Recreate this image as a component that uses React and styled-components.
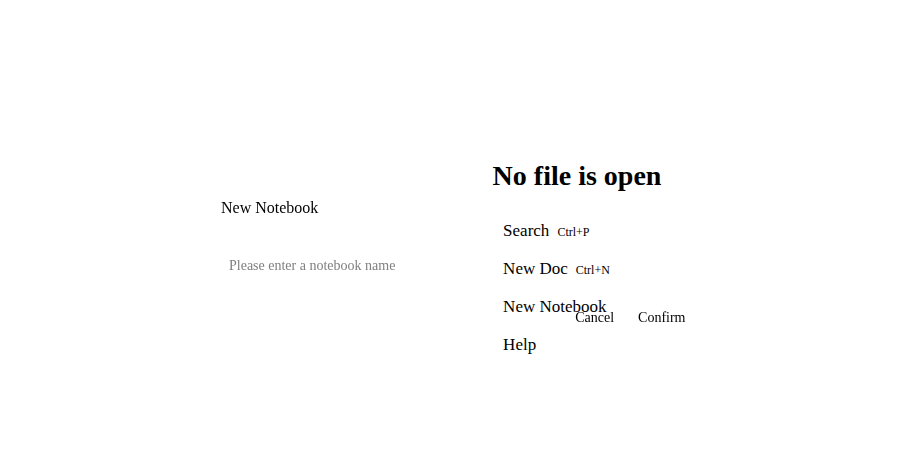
import React, { useState } from 'react';
import styled, { createGlobalStyle } from 'styled-components';

const GlobalStyle = createGlobalStyle`
  html, body {
    margin: 0;
    padding: 0;
    background: #ffffff;
  }
  body {
    font-family: "Liberation Serif", "Times New Roman", serif;
    color: #000000;
  }
`;

const Page = styled.div`
  display: flex;
  height: 468px;
  width: 100%;
`;

const Sidebar = styled.aside`
  width: 245px;
  flex-shrink: 0;
`;

const Main = styled.main`
  flex: 1;
  display: flex;
  justify-content: center;
  padding-top: 160px;
`;

const Empty = styled.div`
  display: flex;
  flex-direction: column;
`;

const Title = styled.h1`
  margin: 0 0 20px;
  font-size: 28px;
  line-height: 32px;
  font-weight: 700;
`;

const ActionList = styled.ul`
  list-style: none;
  margin: 0;
  padding: 0;
`;

const Action = styled.li`
  height: 20px;
  padding: 9px 10px 9px 10.5px;
  font-size: 17px;
  line-height: 20px;
  white-space: nowrap;
`;

const Shortcut = styled.span`
  margin-left: 8px;
  font-size: 12px;
`;

const Overlay = styled.div`
  position: fixed;
  inset: 0;
  display: flex;
  justify-content: center;
  align-items: flex-start;
  padding-top: 199px;
  pointer-events: none;
`;

const Dialog = styled.div`
  width: 500px;
  box-sizing: border-box;
  padding: 0 7px 0 16.5px;
  pointer-events: auto;
`;

const DialogTitle = styled.div`
  font-size: 16px;
  line-height: 18px;
  margin-bottom: 33px;
`;

const NameInput = styled.input`
  display: block;
  width: 100%;
  box-sizing: border-box;
  border: none;
  outline: none;
  background: transparent;
  padding: 8px 8px;
  font-family: "Liberation Serif", "Times New Roman", serif;
  font-size: 14px;
  line-height: 16px;
  color: #000;

  &::placeholder {
    color: #808080;
  }
`;

const Footer = styled.div`
  display: flex;
  justify-content: flex-end;
  margin-top: 22px;
`;

const TextButton = styled.button`
  border: none;
  background: transparent;
  padding: 6px 12px;
  font-family: "Liberation Serif", "Times New Roman", serif;
  font-size: 14px;
  line-height: 16px;
  color: #000;
  cursor: pointer;
`;

const actions = [
  { label: 'Search', key: 'Ctrl+P' },
  { label: 'New Doc', key: 'Ctrl+N' },
  { label: 'New Notebook' },
  { label: 'Help' },
];

export default function App() {
  const [name, setName] = useState('');

  return (
    <>
      <GlobalStyle />
      <Page>
        <Sidebar />
        <Main>
          <Empty>
            <Title>No file is open</Title>
            <ActionList>
              {actions.map((a) => (
                <Action key={a.label}>
                  {a.label}
                  {a.key && <Shortcut>{a.key}</Shortcut>}
                </Action>
              ))}
            </ActionList>
          </Empty>
        </Main>
      </Page>
      <Overlay>
        <Dialog>
          <DialogTitle>New Notebook</DialogTitle>
          <NameInput
            value={name}
            onChange={(e) => setName(e.target.value)}
            placeholder="Please enter a notebook name"
          />
          <Footer>
            <TextButton>Cancel</TextButton>
            <TextButton>Confirm</TextButton>
          </Footer>
        </Dialog>
      </Overlay>
    </>
  );
}
